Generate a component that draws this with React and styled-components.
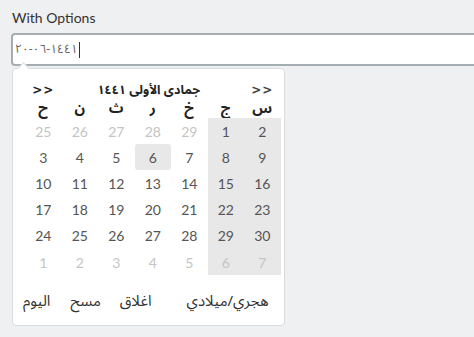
import React from 'react';
import styled, { createGlobalStyle } from 'styled-components';

const WEEKDAYS = ['ح', 'ن', 'ث', 'ر', 'خ', 'ج', 'س'];

const WEEKS = [
    [25, 26, 27, 28, 29, 1, 2],
    [3, 4, 5, 6, 7, 8, 9],
    [10, 11, 12, 13, 14, 15, 16],
    [17, 18, 19, 20, 21, 22, 23],
    [24, 25, 26, 27, 28, 29, 30],
    [1, 2, 3, 4, 5, 6, 7],
];

const SELECTED = 6;
const ARABIC = `"Noto Sans Arabic", "Noto Naskh Arabic", "DejaVu Sans", sans-serif`;

const GlobalStyle = createGlobalStyle`
    html, body { margin: 0; padding: 0; }
    body {
        background: #eef0f1;
        font-family: Lato, "DejaVu Sans", sans-serif;
        overflow: hidden;
    }
`;

export default function App() {
    return (
        <>
            <GlobalStyle />
            <Page>
                <Label>With Options</Label>
                <Field>
                    <FieldText>١٤٤١-٠٦-٢٠</FieldText>
                    <Caret />
                </Field>

                <Popup>
                    <Notch />
                    <Grid>
                        <NavBtn>&gt;&gt;</NavBtn>
                        <MonthTitle>جمادى الأولى ١٤٤١</MonthTitle>
                        <NavBtn $light>&gt;&gt;</NavBtn>

                        {WEEKDAYS.map((d) => <WeekDay key={d}>{d}</WeekDay>)}

                        {WEEKS.map((week, wi) =>
                            week.map((day, di) => {
                                const outside = (wi === 0 && day > 20) || (wi === 5);
                                return (
                                    <Day
                                        key={`${wi}-${di}`}
                                        $weekend={di >= 5}
                                        $outside={outside}
                                        $selected={!outside && day === SELECTED}
                                    >
                                        {day}
                                    </Day>
                                );
                            })
                        )}
                    </Grid>

                    <Footer>
                        <FootBtn $gap={20}>اليوم</FootBtn>
                        <FootBtn $gap={19}>مسح</FootBtn>
                        <FootBtn $gap={35}>اغلاق</FootBtn>
                        <FootBtn>هجري/ميلادي</FootBtn>
                    </Footer>
                </Popup>
            </Page>
        </>
    );
}

// ── Styled Components ──────────────────────────────────────────────────────────

const Page = styled.div`
    padding: 9px 0 0 11px;
    height: 337px;
    box-sizing: border-box;
    overflow: hidden;
`;

const Label = styled.div`
    font-size: 14px; color: #333;
    padding-left: 1px; line-height: 18px;
    margin-bottom: 6px;
`;

const Field = styled.div`
    display: flex; align-items: center;
    height: 29px;
    margin-right: -12px;
    background: #fff;
    border: 2px solid #a3adb2;
    border-radius: 4px;
    padding: 0 0 0 2px;
`;

const FieldText = styled.span`
    direction: ltr;
    font-size: 12px; color: #666;
    font-family: ${ARABIC};
`;

const Caret = styled.span`
    display: inline-block;
    width: 1px; height: 16px;
    background: #333; margin-left: 1px;
`;

const Popup = styled.div`
    position: relative;
    margin: 2px 0 0 1px;
    width: 258px;
    padding: 11px 1px 0 12px;
    background: #fff;
    border: 1px solid #d8dcde;
    border-radius: 4px;
    height: 245px;
`;

const Notch = styled.div`
    position: absolute; top: -5px; left: 6px;
    width: 8px; height: 8px;
    background: #fff;
    border-left: 1px solid #d8dcde;
    border-top: 1px solid #d8dcde;
    transform: rotate(45deg);
`;

const Grid = styled.div`
    display: grid;
    grid-template-columns: repeat(7, 36.5px);
    grid-auto-rows: 26.2px;
    grid-template-rows: 20px 18px;
    direction: ltr;
`;

const NavBtn = styled.div`
    display: flex; align-items: center; justify-content: center;
    font-size: 12px; font-weight: 700; letter-spacing: 1px;
    color: ${({ $light }) => $light ? '#444' : '#222'};
    font-family: "DejaVu Sans", sans-serif;
    line-height: 1;
`;

const MonthTitle = styled.div`
    grid-column: span 5;
    display: flex; align-items: center; justify-content: center;
    direction: rtl;
    padding-right: 8px;
    font-size: 12.5px; font-weight: 700; color: #222;
    font-family: ${ARABIC};
    line-height: 1;
`;

const WeekDay = styled.div`
    display: flex; align-items: center; justify-content: center;
    font-size: 14.5px; font-weight: 700; color: #222;
    font-family: ${ARABIC};
    line-height: 1;
`;

const Day = styled.div`
    display: flex; align-items: center; justify-content: center;
    font-size: 14px;
    color: ${({ $outside }) => $outside ? '#c4c4c4' : '#555'};
    background: ${({ $weekend, $selected }) => ($weekend || $selected) ? '#e8e8e8' : 'transparent'};
    border-radius: ${({ $selected }) => $selected ? '3px' : '0'};
`;

const Footer = styled.div`
    display: flex; align-items: center;
    direction: ltr;
    margin-top: 16px;
    margin-left: -2px;
`;

const FootBtn = styled.span`
    font-size: 15px; color: #333;
    font-family: ${ARABIC};
    margin-right: ${({ $gap }) => ($gap || 0)}px;
    direction: rtl;
    line-height: 20px;
`;
